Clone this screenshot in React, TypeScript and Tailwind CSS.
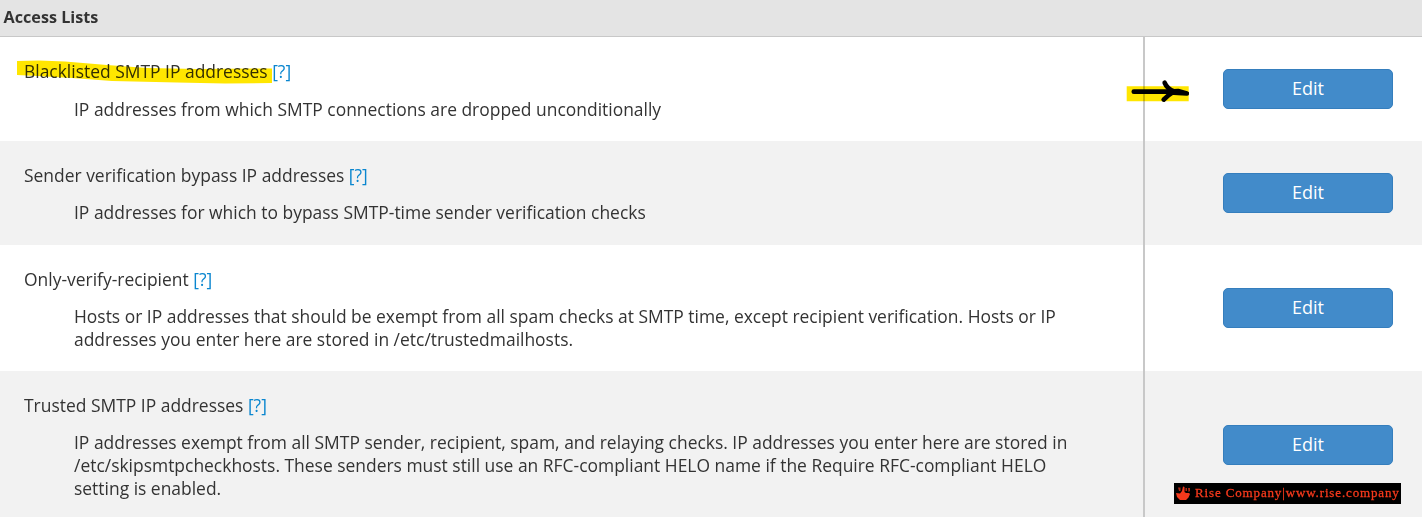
import React from "react";

interface IAccessList {
  title: string;
  lines: string[];
  height: string;
  highlighted?: boolean;
}

const ACCESS_LISTS: IAccessList[] = [
  {
    title: "Blacklisted SMTP IP addresses",
    lines: [
      "IP addresses from which SMTP connections are dropped unconditionally",
    ],
    height: "h-[104px]",
    highlighted: true,
  },
  {
    title: "Sender verification bypass IP addresses",
    lines: ["IP addresses for which to bypass SMTP-time sender verification checks"],
    height: "h-[104px]",
  },
  {
    title: "Only-verify-recipient",
    lines: [
      "Hosts or IP addresses that should be exempt from all spam checks at SMTP time, except recipient verification. Hosts or IP",
      "addresses you enter here are stored in /etc/trustedmailhosts.",
    ],
    height: "h-[126px]",
  },
  {
    title: "Trusted SMTP IP addresses",
    lines: [
      "IP addresses exempt from all SMTP sender, recipient, spam, and relaying checks. IP addresses you enter here are stored in",
      "/etc/skipsmtpcheckhosts. These senders must still use an RFC-compliant HELO name if the Require RFC-compliant HELO",
      "setting is enabled.",
    ],
    height: "h-[148px]",
  },
];

// marker stroke behind the first title
const TitleHighlight: React.FC = () => (
  <svg
    className="absolute left-[17px] top-[22px] mix-blend-multiply"
    width="256"
    height="26"
    viewBox="0 0 256 26"
  >
    <path
      d="M0 2 L22 1.5 L48 2.5 L90 6 L130 9 L180 10 L255 9.5 V24 L208 24.5 L160 23.5 L95 22 L55 19 L20 17 L0 16 Z"
      fill="#ffe600"
    />
  </svg>
);

const ArrowMark: React.FC = () => (
  <svg
    className="absolute left-[-19px] top-[41px] mix-blend-multiply"
    width="66"
    height="28"
    viewBox="0 0 66 28"
  >
    <path d="M0.7 8.2 H62.7 V23.3 H0.7 Z" fill="#ffe600" />
    <g
      fill="none"
      stroke="#000"
      strokeWidth="4.7"
      strokeLinecap="round"
      strokeLinejoin="round"
    >
      <path d="M7.8 13.7 H44 L52 13 L60.8 15.5 L52 14.8 L44 14.5" />
      <path d="M38.7 4.8 Q41 10.5 48 13.5 Q42 17 37.7 21.6" />
    </g>
  </svg>
);

const AccessRow: React.FC<IAccessList> = ({
  title,
  lines,
  height,
  highlighted,
}) => (
  <div className={`flex shrink-0 odd:bg-white even:bg-[#f2f2f2] ${height}`}>
    <div className="relative w-[1143px] shrink-0 pl-6 pt-[23px]">
      <div className="whitespace-nowrap">
        {title} <a className="text-[#0a86cf]">[?]</a>
      </div>
      <div className={`pl-[50px] ${highlighted ? "mt-[15px]" : "mt-[14px]"}`}>
        {lines.map((line) => (
          <p key={line} className="whitespace-nowrap">
            {line}
          </p>
        ))}
      </div>
      {highlighted && <TitleHighlight />}
    </div>
    <div className="relative flex flex-1 items-center border-l-2 border-[#c8c8c8] pl-[78px]">
      <button className="h-10 w-[170px] rounded-[5px] border border-[#357ebd] bg-[#428bca] pb-[2px] text-[18px] text-white">
        Edit
      </button>
      {highlighted && <ArrowMark />}
    </div>
  </div>
);

const Watermark: React.FC = () => (
  <div className="absolute left-[1174px] top-[483px] flex h-[21px] w-[227px] items-center bg-black pl-[2px] text-[#f5391c]">
    <svg
      className="shrink-0"
      width="15"
      height="15"
      viewBox="0 0 15 15"
      fill="currentColor"
    >
      <path d="M0 7 L4 7.5 L6 5 L7 0.500 L8.500 1 V6 L10 7 H13 L14 8 L12.500 11.500 L10 14 H4 L1 11 Z" />
      <path
        d="M2 1.500 H4.500 V5 H3 Z M9.500 2 H11 V5 H9.500 Z M12 2 H14 V5 L12.500 6 Z"
        opacity="0.7"
      />
    </svg>
    <span className="ml-[4px] whitespace-nowrap pb-px font-['Liberation_Serif',serif] text-[13px] font-medium leading-[20px] tracking-[0.86px] [-webkit-text-stroke:0.3px_#f5391c]">
      Rise Company|www.rise.company
    </span>
  </div>
);

export default function App() {
  return (
    <div className="relative flex h-[517px] w-[1422px] flex-col overflow-hidden bg-[#f2f2f2] font-['Open_Sans','Noto_Sans',sans-serif] text-[17.46px] leading-[22.85px] text-[#333]">
      <div className="flex h-[37px] shrink-0 items-center border-b border-[#c8c8c8] bg-[#e4e4e4] pl-[3.5px] pb-[2px] text-[16.2px] font-bold">
        Access Lists
      </div>
      <div className="flex flex-col">
        {ACCESS_LISTS.map((item) => (
          <AccessRow key={item.title} {...item} />
        ))}
      </div>
      <Watermark />
    </div>
  );
}
